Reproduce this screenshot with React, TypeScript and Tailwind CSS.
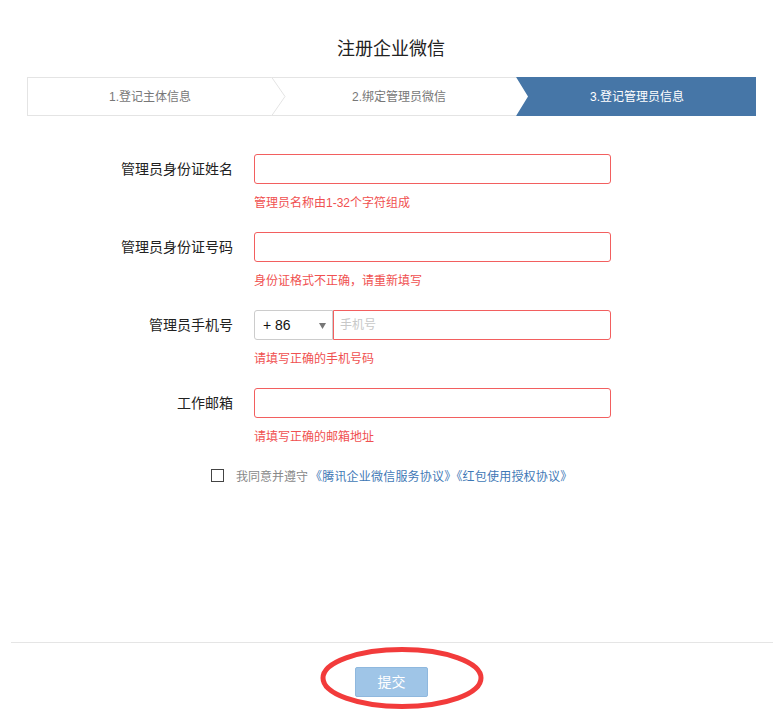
const fields = [
  { label: "管理员身份证姓名", error: "管理员名称由1-32个字符组成" },
  { label: "管理员身份证号码", error: "身份证格式不正确，请重新填写" },
  { label: "管理员手机号", error: "请填写正确的手机号码", phone: true },
  { label: "工作邮箱", error: "请填写正确的邮箱地址" },
];

const FormRow = ({ label, error, phone }: { label: string; error: string; phone?: boolean }) => {
  return (
    <div>
      <div className="flex items-center h-[30px]">
        <div className="w-[233px] text-right text-[14px] leading-[20px] text-[#222]">{label}</div>
        {phone ? (
          <div className="ml-[21px] flex h-[30px]">
            <div className="relative flex w-[79px] items-center border border-[#cccccc] rounded-l-[3px] pl-[8px] text-[14px] text-[#111]">
              + 86
              <svg className="absolute right-[6px] top-[12px]" width="7" height="6" viewBox="0 0 7 6">
                <path d="M0 0 L7 0 L3.5 6 Z" fill="#777" />
              </svg>
            </div>
            <input
              placeholder="手机号"
              className="w-[278px] h-[30px] border border-[#f25f5f] rounded-r-[3px] px-[6px] text-[12px] outline-none placeholder:text-[#c8c8c8]"
            />
          </div>
        ) : (
          <input className="ml-[21px] w-[357px] h-[30px] border border-[#f25f5f] rounded-[3px] outline-none" />
        )}
      </div>
      <p className="ml-[254px] mt-[11px] text-[12px] leading-[16px] text-[#f05050]">{error}</p>
    </div>
  );
};

export default function App() {
  return (
    <div className="min-h-[720px] bg-white font-['Liberation_Sans','Noto_Sans_CJK_SC',sans-serif]">
      <h1 className="pt-[37px] text-center text-[18px] leading-[24px] text-[#222] pl-[3px]">注册企业微信</h1>

      <div className="ml-[27px] mt-[16px] flex h-[39px] text-[12px]">
        <div className="relative flex w-[245px] items-center justify-center border-y border-l border-[#e4e4e4] text-[#777]">
          1.登记主体信息
          <svg className="absolute right-[-14px] top-[-1px] z-10" width="15" height="39" viewBox="0 0 15 39">
            <path d="M0.5 0 L14 19.5 L0.5 39" fill="white" stroke="#e4e4e4" />
          </svg>
        </div>
        <div className="flex w-[244px] items-center justify-center border-y border-[#e4e4e4] text-[#777] pl-[10px]">
          2.绑定管理员微信
        </div>
        <div className="flex w-[240px] items-center justify-center bg-[#4676a7] text-white pl-[2px] [clip-path:polygon(0_0,100%_0,100%_100%,0_100%,12px_50%)]">
          3.登记管理员信息
        </div>
      </div>

      <div className="mt-[38px] flex flex-col gap-[21px]">
        {fields.map((f) => (
          <FormRow key={f.label} label={f.label} error={f.error} phone={f.phone} />
        ))}
      </div>

      <div className="mt-[24px] flex items-center h-[16px] pl-[211px] text-[12px] leading-[16px]">
        <span className="w-[13px] h-[13px] border border-[#444] -mt-[3px]" />
        <span className="ml-[12px] text-[#888]">我同意并遵守</span>
        <span className="ml-[2px] text-[#3f79b6] tracking-[0.2px]">《腾讯企业微信服务协议》《红包使用授权协议》</span>
      </div>

      <div className="mt-[157px] ml-[11px] mr-[6px] h-px bg-[#e5e5e5]" />

      <div className="relative mt-[24px] h-[53px]">
        <button className="ml-[355px] w-[73px] h-[30px] rounded-[2px] border border-[#8fb8de] bg-[#9fc5e7] text-[14px] text-white">
          提交
        </button>
        <svg className="absolute left-[318px] top-[-23px]" width="168" height="68" viewBox="0 0 168 68">
          <ellipse cx="84" cy="34" rx="79" ry="28.5" fill="none" stroke="#f23b3b" strokeWidth="5" />
        </svg>
      </div>
    </div>
  );
}
